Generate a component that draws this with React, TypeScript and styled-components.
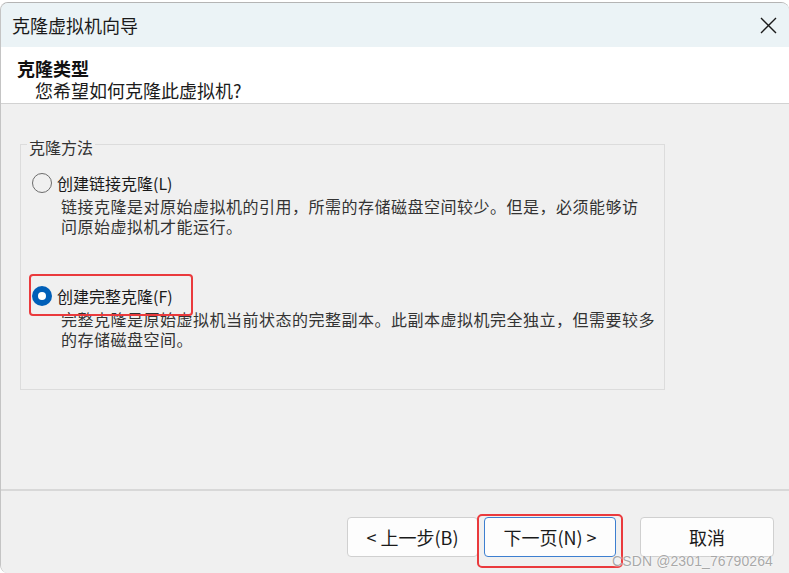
import React from "react";
import styled, { createGlobalStyle } from "styled-components";

const Global = createGlobalStyle`
  html, body { margin: 0; padding: 0; background: #ffffff; }
  body { font-family: "Noto Sans CJK SC", "Noto Sans", sans-serif; }
  * { box-sizing: border-box; }
`;

const Window = styled.div`
  margin-top: 2px;
  width: 789px;
  height: 571px;
  display: flex;
  flex-direction: column;
  border-top: 1px solid #b4b4b4;
  border-left: 1px solid #c4c4c4;
  border-radius: 8px 8px 0 8px;
  overflow: hidden;
  background: #f0f0f0;
  position: relative;
  font-family: "Noto Sans CJK SC", "Noto Sans", sans-serif;
  color: #1b1b1b;
`;

const TitleBar = styled.div`
  height: 44px;
  flex: none;
  display: flex;
  align-items: center;
  justify-content: space-between;
  padding: 0 12px 0 11px;
  background: #ebf3f6;
  font-size: 18px;
  line-height: 22px;
  color: #1a1a1a;
`;

const CloseButton = styled.span`
  display: flex;
  width: 18px;
  height: 18px;
  align-items: center;
  justify-content: center;
`;

const Header = styled.div`
  height: 57px;
  flex: none;
  background: #ffffff;
  border-bottom: 1px solid #d2d2d2;
  padding: 10px 16px 0 16px;
`;

const HeaderTitle = styled.div`
  font-size: 18px;
  line-height: 22px;
  font-weight: 700;
  color: #111;
`;

const HeaderSubtitle = styled.div`
  font-size: 18px;
  line-height: 22px;
  padding-left: 18px;
  color: #1b1b1b;
`;

const Body = styled.div`
  flex: 1;
  padding: 27px 0 0 19px;
  background: #f0f0f0;
`;

const GroupBox = styled.fieldset`
  margin: 0;
  width: 645px;
  height: 259px;
  border: 1px solid #dcdcdc;
  padding: 0 11px;
  min-width: 0;
`;

const GroupLegend = styled.legend`
  padding: 6px 2px 0 2px;
  margin-left: -5px;
  font-size: 16px;
  line-height: 20px;
  color: #333;
`;

const Option = styled.div<{ $gap: number }>`
  margin-top: ${(p) => p.$gap}px;
`;

const RadioRow = styled.div<{ $highlight?: boolean }>`
  position: relative;
  display: flex;
  align-items: center;
  gap: 5px;
  height: 20px;
  font-size: 16px;
  line-height: 20px;
  color: #1a1a1a;
  ${(p) =>
    p.$highlight
      ? `
    &::after {
      content: "";
      position: absolute;
      left: -3px;
      top: -12px;
      width: 160px;
      height: 38px;
      border: 2px solid #ea3a3d;
      border-radius: 4px;
      pointer-events: none;
    }
  `
      : ""}
`;

const RadioCircle = styled.span<{ $checked?: boolean }>`
  width: 20px;
  height: 20px;
  border-radius: 50%;
  flex: none;
  display: flex;
  align-items: center;
  justify-content: center;
  background: ${(p) => (p.$checked ? "#005fb8" : "transparent")};
  border: ${(p) => (p.$checked ? "none" : "1.5px solid #6c6c6c")};
  &::after {
    content: "";
    display: ${(p) => (p.$checked ? "block" : "none")};
    width: 8px;
    height: 8px;
    border-radius: 50%;
    background: #ffffff;
  }
`;

const Description = styled.div`
  margin: 3px 0 0 29px;
  font-size: 16px;
  line-height: 20px;
  letter-spacing: 0.5px;
  color: #333333;
  white-space: nowrap;
`;

const Footer = styled.div`
  height: 84px;
  flex: none;
  border-top: 2px solid #d8d8d8;
  background: #f0f0f0;
  display: flex;
  justify-content: flex-end;
  align-items: flex-start;
  padding: 26px 15px 0 0;
  position: relative;
`;

const Button = styled.button<{ $primary?: boolean; $highlight?: boolean; $ml?: number; $w: number }>`
  position: relative;
  width: ${(p) => p.$w}px;
  height: 40px;
  margin-left: ${(p) => p.$ml ?? 0}px;
  background: #fdfdfd;
  border: 1px solid ${(p) => (p.$primary ? "#3d7fd0" : "#d0d0d0")};
  border-radius: 4px;
  font-family: "Noto Sans CJK SC", "Noto Sans", sans-serif;
  font-size: 18px;
  line-height: 22px;
  color: #1a1a1a;
  padding: 0;
  ${(p) =>
    p.$highlight
      ? `
    &::after {
      content: "";
      position: absolute;
      left: -8px;
      top: -4px;
      width: 142px;
      height: 50px;
      border: 2.5px solid #ea3a3d;
      border-radius: 5px;
      pointer-events: none;
    }
  `
      : ""}
`;

const Watermark = styled.span`
  position: absolute;
  right: 16px;
  bottom: 4px;
  font-family: "Liberation Sans", Arial, sans-serif;
  font-size: 14px;
  line-height: 16px;
  color: #a8a8a8;
  letter-spacing: 0.1px;
  text-shadow: 0 0 2px #ffffff, 0 0 1px #ffffff;
  pointer-events: none;
`;

function CloseIcon() {
  return (
    <svg width="17" height="17" viewBox="0 0 17 17">
      <path d="M1 1 L16 16 M16 1 L1 16" stroke="#1a1a1a" strokeWidth="1.4" fill="none" />
    </svg>
  );
}

export default function App() {
  return (
    <>
      <Global />
      <Window>
        <TitleBar>
          <span>克隆虚拟机向导</span>
          <CloseButton>
            <CloseIcon />
          </CloseButton>
        </TitleBar>
        <Header>
          <HeaderTitle>克隆类型</HeaderTitle>
          <HeaderSubtitle>您希望如何克隆此虚拟机?</HeaderSubtitle>
        </Header>
        <Body>
          <GroupBox>
            <GroupLegend>克隆方法</GroupLegend>
            <Option $gap={16}>
              <RadioRow>
                <RadioCircle />
                <span>创建链接克隆(L)</span>
              </RadioRow>
              <Description>
                链接克隆是对原始虚拟机的引用，所需的存储磁盘空间较少。但是，必须能够访
                <br />
                问原始虚拟机才能运行。
              </Description>
            </Option>
            <Option $gap={50}>
              <RadioRow $highlight>
                <RadioCircle $checked />
                <span>创建完整克隆(F)</span>
              </RadioRow>
              <Description>
                完整克隆是原始虚拟机当前状态的完整副本。此副本虚拟机完全独立，但需要较多
                <br />
                的存储磁盘空间。
              </Description>
            </Option>
          </GroupBox>
        </Body>
        <Footer>
          <Button $w={131}>&lt; 上一步(B)</Button>
          <Button $w={132} $primary $highlight $ml={6}>
            下一页(N) &gt;
          </Button>
          <Button $w={134} $ml={24}>取消</Button>
          <Watermark>CSDN @2301_76790264</Watermark>
        </Footer>
      </Window>
    </>
  );
}
